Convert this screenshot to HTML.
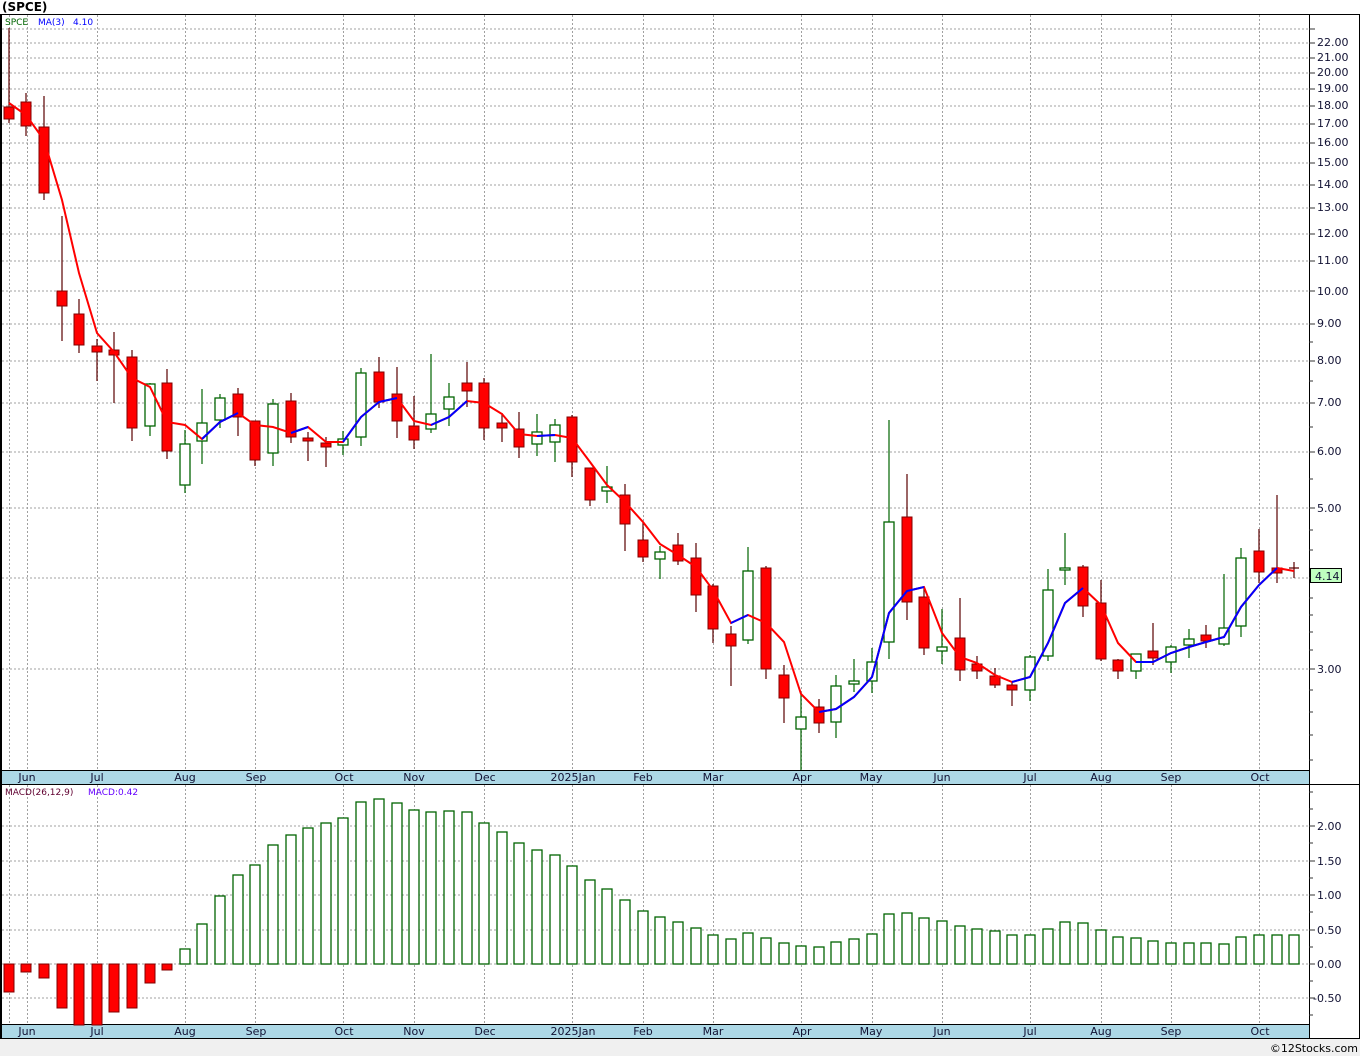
<!DOCTYPE html>
<html><head><meta charset="utf-8"><style>
html,body{margin:0;padding:0;background:#fff}
svg{display:block}
text{font-family:"DejaVu Sans","Liberation Sans",sans-serif}
</style></head><body>
<svg width="1360" height="1056" viewBox="0 0 1360 1056" xmlns="http://www.w3.org/2000/svg">
<rect x="0" y="0" width="1360" height="1056" fill="#fff"/>
<rect x="0" y="1039" width="1360" height="17" fill="#f0f0f0"/>
<text x="2" y="11" font-size="12" font-weight="bold" fill="#000">(SPCE)</text>
<text x="1358" y="1052" font-size="11" fill="#000" text-anchor="end">©12Stocks.com</text>

<!-- grids main -->
<g stroke="#a0a0a0" stroke-width="1" stroke-dasharray="2,2">
<path d="M2 29H1309M2 43H1309M2 58H1309M2 73H1309M2 89H1309M2 106H1309M2 124H1309M2 143H1309M2 163H1309M2 185H1309M2 208H1309M2 234H1309M2 261H1309M2 291H1309M2 324H1309M2 361H1309M2 403H1309M2 452H1309M2 508H1309M2 578H1309M2 669H1309"/>
<path d="M9.5 15V770M27.5 15V770M97.5 15V770M185.5 15V770M255.5 15V770M343.5 15V770M414.5 15V770M484.5 15V770M572.5 15V770M643.5 15V770M713.5 15V770M801.5 15V770M872.5 15V770M942.5 15V770M1030.5 15V770M1101.5 15V770M1171.5 15V770M1259.5 15V770"/>
<path d="M2 826H1309M2 861H1309M2 895H1309M2 930H1309M2 964H1309M2 998H1309"/>
<path d="M9.5 785V1024M27.5 785V1024M97.5 785V1024M185.5 785V1024M255.5 785V1024M343.5 785V1024M414.5 785V1024M484.5 785V1024M572.5 785V1024M643.5 785V1024M713.5 785V1024M801.5 785V1024M872.5 785V1024M942.5 785V1024M1030.5 785V1024M1101.5 785V1024M1171.5 785V1024M1259.5 785V1024"/>
</g>

<!-- bands -->
<rect x="1" y="770" width="1308" height="14" fill="#add8e6"/>
<rect x="1" y="1024" width="1308" height="14" fill="#add8e6"/>
<g font-size="11" fill="#111133" text-anchor="middle">
<text x="27" y="781">Jun</text><text x="97" y="781">Jul</text><text x="185" y="781">Aug</text><text x="256" y="781">Sep</text><text x="344" y="781">Oct</text><text x="414" y="781">Nov</text><text x="485" y="781">Dec</text><text x="573" y="781">2025Jan</text><text x="643" y="781">Feb</text><text x="713" y="781">Mar</text><text x="802" y="781">Apr</text><text x="871" y="781">May</text><text x="942" y="781">Jun</text><text x="1030" y="781">Jul</text><text x="1101" y="781">Aug</text><text x="1171" y="781">Sep</text><text x="1260" y="781">Oct</text>
<text x="27" y="1035">Jun</text><text x="97" y="1035">Jul</text><text x="185" y="1035">Aug</text><text x="256" y="1035">Sep</text><text x="344" y="1035">Oct</text><text x="414" y="1035">Nov</text><text x="485" y="1035">Dec</text><text x="573" y="1035">2025Jan</text><text x="643" y="1035">Feb</text><text x="713" y="1035">Mar</text><text x="802" y="1035">Apr</text><text x="871" y="1035">May</text><text x="942" y="1035">Jun</text><text x="1030" y="1035">Jul</text><text x="1101" y="1035">Aug</text><text x="1171" y="1035">Sep</text><text x="1260" y="1035">Oct</text>
</g>

<!-- frame -->
<g stroke="#000" stroke-width="1" fill="none">
<path d="M0 14.5H1360M0 770.5H1309M0 784.5H1360M0 1024.5H1309M0 1038.5H1360"/>
<path d="M1309.5 14V1038M1359.5 14V1038"/>
</g>
<rect x="0" y="14" width="2" height="1025" fill="#000"/>

<!-- right axis ticks & labels -->
<g stroke="#333" stroke-width="1">
<path d="M1309 29H1315M1309 43H1315M1309 58H1315M1309 73H1315M1309 89H1315M1309 106H1315M1309 124H1315M1309 143H1315M1309 163H1315M1309 185H1315M1309 208H1315M1309 234H1315M1309 261H1315M1309 291H1315M1309 324H1315M1309 361H1315M1309 403H1315M1309 452H1315M1309 508H1315M1309 578H1315M1309 669H1315"/>
<path d="M1309 342H1313M1309 381H1313M1309 427H1313M1309 479H1313M1309 530H1313M1309 550H1313M1309 598H1313M1309 615H1313M1309 632H1313M1309 650H1313M1309 690H1313M1309 712H1313M1309 735H1313M1309 760H1313"/>
<path d="M1309 792H1313M1309 809H1313M1309 826H1315M1309 843H1313M1309 861H1315M1309 878H1313M1309 895H1315M1309 912H1313M1309 930H1315M1309 947H1313M1309 964H1315M1309 981H1313M1309 998H1315M1309 1015H1313"/>
</g>
<g font-size="11" fill="#111133">
<text x="1317" y="46">22.00</text><text x="1317" y="61">21.00</text><text x="1317" y="76">20.00</text><text x="1317" y="92">19.00</text><text x="1317" y="109">18.00</text><text x="1317" y="127">17.00</text><text x="1317" y="146">16.00</text><text x="1317" y="166">15.00</text><text x="1317" y="188">14.00</text><text x="1317" y="211">13.00</text><text x="1317" y="237">12.00</text><text x="1317" y="264">11.00</text><text x="1317" y="295">10.00</text><text x="1317" y="327">9.00</text><text x="1317" y="364">8.00</text><text x="1317" y="406">7.00</text><text x="1317" y="455">6.00</text><text x="1317" y="512">5.00</text><text x="1317" y="673">3.00</text>
<text x="1317" y="830">2.00</text><text x="1317" y="865">1.50</text><text x="1317" y="899">1.00</text><text x="1317" y="934">0.50</text><text x="1317" y="968">0.00</text><text x="1313" y="1002">-0.50</text>
</g>
<rect x="1310.5" y="568.5" width="31" height="14" fill="#c0ffc0" stroke="#000"/>
<text x="1315" y="580" font-size="11" fill="#111133">4.14</text>

<!-- legends -->
<text x="5" y="25" font-size="9" fill="#006400">SPCE</text>
<text x="38" y="25" font-size="9" fill="#0000ff">MA(3)</text>
<text x="73" y="25" font-size="9" fill="#0000ff">4.10</text>
<text x="5" y="795" font-size="9" fill="#600030">MACD(26,12,9)</text>
<text x="88" y="795" font-size="9" fill="#6600ff">MACD:0.42</text>

<!-- red candles -->
<g stroke="#5a0000" stroke-width="1.2">
<path d="M9 28V123M26 93V136M44 96V200M62 216V341M79 299V353M97 339V381M114 332V403M132 350V441M167 369V459M238 388V436M255 421V466M291 393V443M308 432V461M326 437V467M379 357V408M397 367V438M414 396V449M467 362V407M484 378V440M502 413V442M519 412V458M572 415V477M590 468V506M625 484V551M643 523V562M678 533V565M696 543V612M713 584V643M731 626V686M766 566V679M784 665V723M819 699V733M907 474V620M924 587V655M960 598V681M977 656V679M995 668V688M1012 681V706M1083 565V617M1101 580V661M1118 659V679M1153 623V665M1206 625V648M1259 529V583M1277 495V583M1294 562V578M1289 568H1299"/>
</g>
<g fill="#ff0000" stroke="#800000" stroke-width="1">
<rect x="4" y="107" width="10" height="12"/><rect x="21" y="102" width="10" height="24"/><rect x="39" y="127" width="10" height="66"/><rect x="57" y="291" width="10" height="15"/><rect x="74" y="314" width="10" height="31"/><rect x="92" y="346" width="10" height="6"/><rect x="109" y="350" width="10" height="5"/><rect x="127" y="357" width="10" height="71"/><rect x="162" y="383" width="10" height="68"/><rect x="233" y="394" width="10" height="23"/><rect x="250" y="421" width="10" height="39"/><rect x="286" y="401" width="10" height="36"/><rect x="303" y="438" width="10" height="3"/><rect x="321" y="443" width="10" height="4"/><rect x="374" y="372" width="10" height="30"/><rect x="392" y="394" width="10" height="27"/><rect x="409" y="426" width="10" height="14"/><rect x="462" y="383" width="10" height="8"/><rect x="479" y="383" width="10" height="45"/><rect x="497" y="423" width="10" height="5"/><rect x="514" y="429" width="10" height="18"/><rect x="567" y="417" width="10" height="45"/><rect x="585" y="468" width="10" height="32"/><rect x="620" y="495" width="10" height="29"/><rect x="638" y="540" width="10" height="17"/><rect x="673" y="545" width="10" height="16"/><rect x="691" y="558" width="10" height="37"/><rect x="708" y="586" width="10" height="43"/><rect x="726" y="634" width="10" height="12"/><rect x="761" y="568" width="10" height="101"/><rect x="779" y="675" width="10" height="23"/><rect x="814" y="707" width="10" height="16"/><rect x="902" y="517" width="10" height="85"/><rect x="919" y="597" width="10" height="51"/><rect x="955" y="638" width="10" height="32"/><rect x="972" y="664" width="10" height="7"/><rect x="990" y="676" width="10" height="9"/><rect x="1007" y="685" width="10" height="5"/><rect x="1078" y="567" width="10" height="39"/><rect x="1096" y="603" width="10" height="56"/><rect x="1113" y="660" width="10" height="11"/><rect x="1148" y="651" width="10" height="7"/><rect x="1201" y="635" width="10" height="6"/><rect x="1254" y="551" width="10" height="21"/><rect x="1272" y="568" width="10" height="5"/>
</g>
<!-- green candles -->
<g stroke="#006400" stroke-width="1.2">
<path d="M150 383V436M185 430V493M202 389V464M220 394V428M273 399V466M343 431V455M361 368V446M431 354V433M449 383V426M537 414V456M555 419V462M607 466V503M660 546V579M748 547V644M801 693V770M836 675V738M854 659V692M872 648V693M889 420V659M942 609V664M1030 655V701M1048 569V661M1065 533V585M1136 654V679M1171 645V673M1189 629V658M1224 574V646M1241 548V637"/>
</g>
<g fill="#fff" stroke="#006400" stroke-width="1.3">
<rect x="145" y="384" width="10" height="42"/><rect x="180" y="444" width="10" height="41"/><rect x="197" y="423" width="10" height="18"/><rect x="215" y="398" width="10" height="22"/><rect x="268" y="404" width="10" height="49"/><rect x="338" y="439" width="10" height="6"/><rect x="356" y="373" width="10" height="64"/><rect x="426" y="414" width="10" height="15"/><rect x="444" y="397" width="10" height="12"/><rect x="532" y="432" width="10" height="12"/><rect x="550" y="425" width="10" height="17"/><rect x="602" y="487" width="10" height="4"/><rect x="655" y="552" width="10" height="7"/><rect x="743" y="571" width="10" height="69"/><rect x="796" y="717" width="10" height="12"/><rect x="831" y="686" width="10" height="36"/><rect x="849" y="681" width="10" height="3"/><rect x="867" y="662" width="10" height="19"/><rect x="884" y="522" width="10" height="120"/><rect x="937" y="647" width="10" height="4"/><rect x="1025" y="657" width="10" height="33"/><rect x="1043" y="590" width="10" height="66"/><rect x="1060" y="568" width="10" height="2"/><rect x="1131" y="654" width="10" height="17"/><rect x="1166" y="647" width="10" height="15"/><rect x="1184" y="639" width="10" height="6"/><rect x="1219" y="628" width="10" height="16"/><rect x="1236" y="558" width="10" height="68"/>
</g>

<!-- MA line -->
<polyline fill="none" stroke="#ff0000" stroke-width="2" points="9,103 26,115 44,140 62,200 79,273 97,333 114,352 132,378 150,387 167,422 185,425 202,439 220,422 238,413 255,425 273,427 291,433 308,427 326,442 343,442 361,417 379,402 397,398 414,421 431,425 449,417 467,401 484,403 502,414 519,434 537,436 555,435 572,438 590,462 607,485 625,502 643,522 660,544 678,555 696,567 713,590 731,623 748,615 766,623 784,642 801,694 819,712 836,709 854,697 872,677 889,613 907,591 924,587 942,633 960,657 977,663 995,675 1012,682 1030,677 1048,643 1065,603 1083,588 1101,605 1118,643 1136,662 1153,662 1171,653 1189,647 1206,642 1224,637 1241,607 1259,585 1277,568 1294,571"/>
<g fill="none" stroke="#0000ff" stroke-width="2">
<polyline points="202,439 220,422 238,413"/>
<polyline points="291,433 308,427"/>
<polyline points="343,442 361,417 379,402 397,398"/>
<polyline points="431,425 449,417 467,401"/>
<polyline points="537,436 555,435"/>
<polyline points="731,623 748,615"/>
<polyline points="819,712 836,709 854,697 872,677 889,613 907,591 924,587"/>
<polyline points="1012,682 1030,677 1048,643 1065,603 1083,588"/>
<polyline points="1136,662 1153,662 1171,653 1189,647 1206,642 1224,637 1241,607 1259,585 1277,568"/>
</g>

<!-- MACD negative -->
<g fill="#ff0000" stroke="#800000" stroke-width="1">
<rect x="4" y="964" width="10" height="28"/><rect x="21" y="964" width="10" height="8"/><rect x="39" y="964" width="10" height="14"/><rect x="57" y="964" width="10" height="44"/><rect x="74" y="964" width="10" height="61"/><rect x="92" y="964" width="10" height="61"/><rect x="109" y="964" width="10" height="48"/><rect x="127" y="964" width="10" height="44"/><rect x="145" y="964" width="10" height="19"/><rect x="162" y="964" width="10" height="6"/>
</g>
<!-- MACD positive -->
<g fill="#fff" stroke="#006400" stroke-width="1.3">
<rect x="180" y="949" width="10" height="15"/><rect x="197" y="924" width="10" height="40"/><rect x="215" y="896" width="10" height="68"/><rect x="233" y="875" width="10" height="89"/><rect x="250" y="865" width="10" height="99"/><rect x="268" y="845" width="10" height="119"/><rect x="286" y="835" width="10" height="129"/><rect x="303" y="828" width="10" height="136"/><rect x="321" y="823" width="10" height="141"/><rect x="338" y="818" width="10" height="146"/><rect x="356" y="802" width="10" height="162"/><rect x="374" y="799" width="10" height="165"/><rect x="392" y="803" width="10" height="161"/><rect x="409" y="810" width="10" height="154"/><rect x="426" y="812" width="10" height="152"/><rect x="444" y="811" width="10" height="153"/><rect x="462" y="812" width="10" height="152"/><rect x="479" y="823" width="10" height="141"/><rect x="497" y="832" width="10" height="132"/><rect x="514" y="843" width="10" height="121"/><rect x="532" y="850" width="10" height="114"/><rect x="550" y="855" width="10" height="109"/><rect x="567" y="866" width="10" height="98"/><rect x="585" y="880" width="10" height="84"/><rect x="602" y="889" width="10" height="75"/><rect x="620" y="900" width="10" height="64"/><rect x="638" y="911" width="10" height="53"/><rect x="655" y="917" width="10" height="47"/><rect x="673" y="922" width="10" height="42"/><rect x="691" y="928" width="10" height="36"/><rect x="708" y="935" width="10" height="29"/><rect x="726" y="939" width="10" height="25"/><rect x="743" y="933" width="10" height="31"/><rect x="761" y="938" width="10" height="26"/><rect x="779" y="943" width="10" height="21"/><rect x="796" y="946" width="10" height="18"/><rect x="814" y="947" width="10" height="17"/><rect x="831" y="942" width="10" height="22"/><rect x="849" y="939" width="10" height="25"/><rect x="867" y="934" width="10" height="30"/><rect x="884" y="914" width="10" height="50"/><rect x="902" y="913" width="10" height="51"/><rect x="919" y="918" width="10" height="46"/><rect x="937" y="921" width="10" height="43"/><rect x="955" y="926" width="10" height="38"/><rect x="972" y="929" width="10" height="35"/><rect x="990" y="931" width="10" height="33"/><rect x="1007" y="935" width="10" height="29"/><rect x="1025" y="935" width="10" height="29"/><rect x="1043" y="929" width="10" height="35"/><rect x="1060" y="922" width="10" height="42"/><rect x="1078" y="923" width="10" height="41"/><rect x="1096" y="930" width="10" height="34"/><rect x="1113" y="937" width="10" height="27"/><rect x="1131" y="938" width="10" height="26"/><rect x="1148" y="941" width="10" height="23"/><rect x="1166" y="943" width="10" height="21"/><rect x="1184" y="943" width="10" height="21"/><rect x="1201" y="943" width="10" height="21"/><rect x="1219" y="944" width="10" height="20"/><rect x="1236" y="937" width="10" height="27"/><rect x="1254" y="935" width="10" height="29"/><rect x="1272" y="935" width="10" height="29"/><rect x="1289" y="935" width="10" height="29"/>
</g>
</svg>
</body></html>
